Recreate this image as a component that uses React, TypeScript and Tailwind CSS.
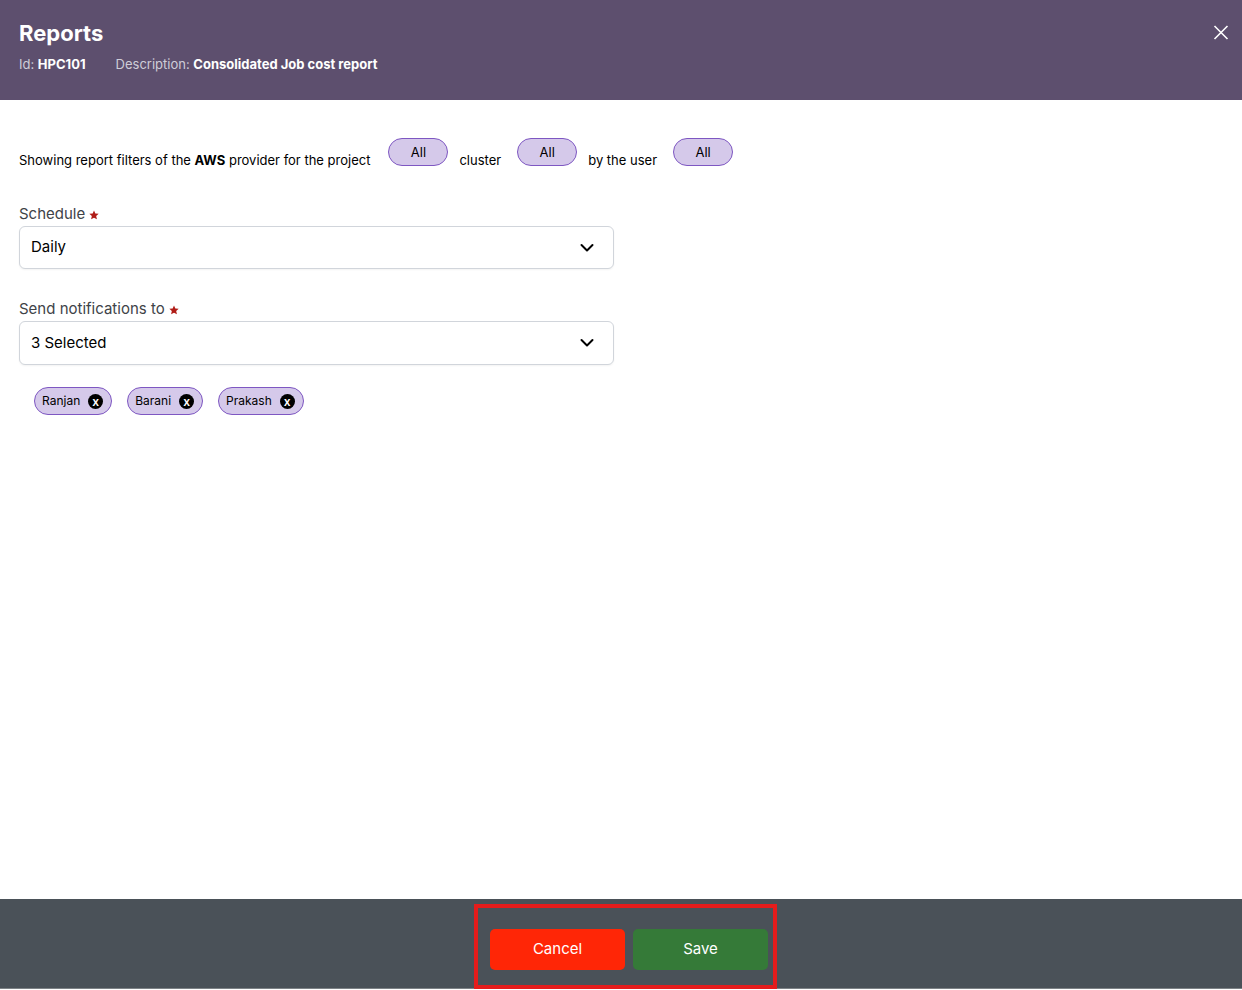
import { useState } from "react";
import type { ReactNode } from "react";

function Star() {
  return (
    <svg viewBox="0 0 24 24" className="mt-0.5 size-2.5 shrink-0" fill="#b01c17" aria-hidden="true">
      <path d="M12 1l3.2 7.4 8 .8-6 5.300 1.800 7.900L12 18.300 5 22.400l1.800-7.900-6-5.300 8-.8z" />
    </svg>
  );
}

function Chevron() {
  return (
    <svg
      viewBox="0 0 16 16"
      className="pointer-events-none size-4 shrink-0"
      fill="none"
      stroke="#000"
      strokeWidth="2"
      strokeLinecap="round"
      strokeLinejoin="round"
      aria-hidden="true"
    >
      <path d="M2.500 5L8 10.500l5.500-5.500" />
    </svg>
  );
}

function FilterPill({ label }: { label: string }) {
  return (
    <button
      type="button"
      aria-label={label}
      className="mb-2 flex h-7 w-15 items-center justify-center rounded-full border border-[#7e57c2] bg-[#d5c9ea] pt-px text-[13px] text-black"
    >
      All
    </button>
  );
}

function FieldLabel({ id, htmlFor, children }: { id?: string; htmlFor: string; children: ReactNode }) {
  return (
    <label id={id} htmlFor={htmlFor} className="flex h-6 items-center gap-1 text-[15px] leading-6 text-[#404348]">
      {children}
      <Star />
    </label>
  );
}

export default function App() {
  const [people, setPeople] = useState(["Ranjan", "Barani", "Prakash"]);

  return (
    <div className="flex min-h-screen flex-col bg-white pb-px font-['Inter',sans-serif] text-black">
      <header className="flex h-25 items-start justify-between bg-[#5d4f6e] pt-[19px] pr-3 pl-[19px] text-white">
        <div>
          <h1 className="text-[22px] leading-7 font-bold">Reports</h1>
          <div className="mt-[7px] flex gap-[30px] text-[13px] leading-5 text-[#cfcdd8]">
            <p>
              Id: <strong className="font-bold text-white">HPC101</strong>
            </p>
            <p>
              Description: <strong className="font-bold text-white">Consolidated Job cost report</strong>
            </p>
          </div>
        </div>
        <button type="button" aria-label="Close" className="mt-[5px]">
          <svg viewBox="0 0 18 18" className="size-[18px]" fill="none" stroke="#fff" strokeWidth="1.600" aria-hidden="true">
            <path d="M2.500 2l13 13M15.500 2l-13 13" />
          </svg>
        </button>
      </header>

      <main className="flex-1 px-[19px] pt-[38px]">
        <div className="flex flex-wrap items-center text-[13px]">
          <p className="mr-[18px] pt-[9px]">
            Showing report filters of the <strong className="font-bold">AWS</strong> provider for the project
          </p>
          <FilterPill label="Project: All" />
          <span className="mr-4 ml-[11px] pt-[9px]">cluster</span>
          <FilterPill label="Cluster: All" />
          <span className="mr-4 ml-[11px] pt-[9px]">by the user</span>
          <FilterPill label="User: All" />
        </div>

        <div className="mt-7 grid grid-cols-2 gap-x-3.5">
          <div className="flex flex-col gap-7">
            <div>
              <FieldLabel htmlFor="schedule">Schedule</FieldLabel>
              <div className="relative flex items-center">
                <select
                  id="schedule"
                  className="h-[43px] w-full appearance-none rounded-md border border-[#d1d5db] bg-white pr-10 pb-px pl-[11px] text-[15px] shadow-xs"
                >
                  <option>Daily</option>
                  <option>Weekly</option>
                  <option>Monthly</option>
                </select>
                <span className="pointer-events-none absolute right-[19px]">
                  <Chevron />
                </span>
              </div>
            </div>

            <div>
              <FieldLabel id="recipients-label" htmlFor="recipients">
                Send notifications to
              </FieldLabel>
              <button
                id="recipients"
                type="button"
                aria-haspopup="listbox"
                aria-labelledby="recipients-label recipients"
                className="flex h-11 w-full items-center justify-between rounded-md border border-[#d1d5db] bg-white pr-[18px] pl-[11px] text-[15px] shadow-xs"
              >
                {people.length} Selected
                <Chevron />
              </button>
              <ul className="mt-[22px] ml-[15px] flex flex-wrap gap-[15px]">
                {people.map((name) => (
                  <li
                    key={name}
                    className="flex h-7 items-center gap-2 rounded-full border border-[#7e57c2] bg-[#d5c9ea] pr-2 pl-[7px] text-[12px]"
                  >
                    {name}
                    <button
                      type="button"
                      aria-label={`Remove ${name}`}
                      onClick={() => setPeople(people.filter((person) => person !== name))}
                      className="flex size-[15px] items-center justify-center rounded-full bg-black pt-px text-[12px] leading-none font-semibold text-white"
                    >
                      x
                    </button>
                  </li>
                ))}
              </ul>
            </div>
          </div>
        </div>
      </main>

      <footer className="flex justify-center border-b border-[#7d8286] bg-[#4a5158] pt-[5px] pl-[9px]">
        <div className="-mb-px flex gap-2 border-4 border-[#e51c1c] pt-[21px] pr-[5px] pb-[15px] pl-3 text-[15px] text-white">
          <button type="button" className="h-[41px] w-[135px] rounded-[5px] bg-[#ff2606]">
            Cancel
          </button>
          <button type="button" className="h-[41px] w-[135px] rounded-[5px] bg-[#357a38]">
            Save
          </button>
        </div>
      </footer>
    </div>
  );
}
